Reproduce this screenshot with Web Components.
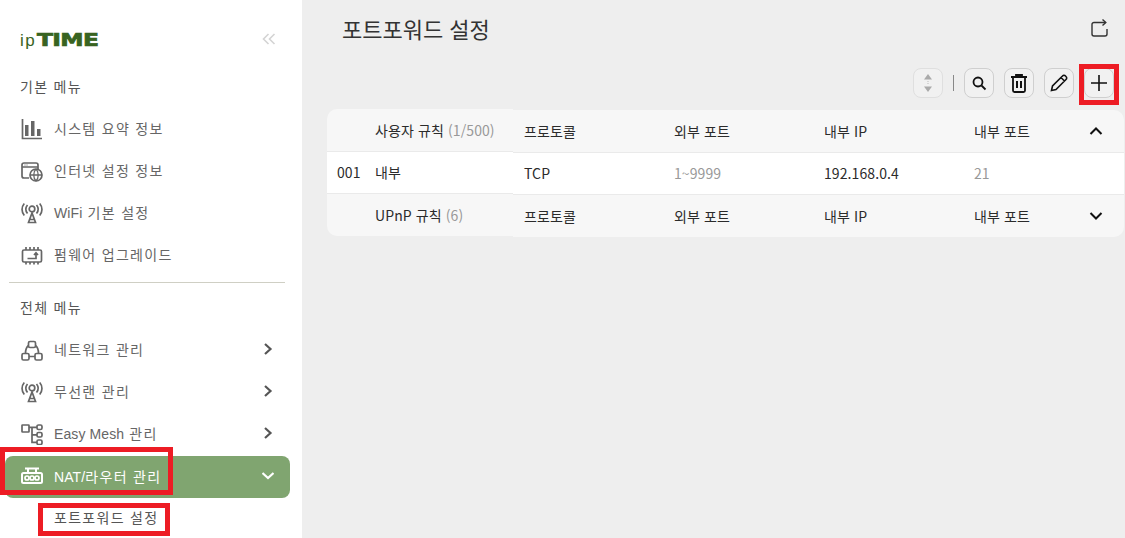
<!DOCTYPE html>
<html lang="ko">
<head>
<meta charset="utf-8">
<title>포트포워드 설정</title>
<style>
  html, body { margin: 0; height: 538px; overflow: hidden; }
  body { display: flex; background: #eeeeee; font-family: "Noto Sans CJK KR", sans-serif; }
  .mark { position: absolute; border: 5px solid #ed1c24; box-sizing: border-box; pointer-events: none; }
  .lat { letter-spacing: .1px; }
</style>
</head>
<body>
<side-bar>
  <brand-head></brand-head>
  <menu-label>기본 메뉴</menu-label>
  <menu-item icon="chart">시스템 요약 정보</menu-item>
  <menu-item icon="web">인터넷 설정 정보</menu-item>
  <menu-item icon="wifi"><span class="lat">WiFi</span> 기본 설정</menu-item>
  <menu-item icon="chip">펌웨어 업그레이드</menu-item>
  <menu-rule></menu-rule>
  <menu-label>전체 메뉴</menu-label>
  <menu-item icon="net" arrow="right">네트워크 관리</menu-item>
  <menu-item icon="wifi" arrow="right">무선랜 관리</menu-item>
  <menu-item icon="mesh" arrow="right"><span class="lat">Easy Mesh</span> 관리</menu-item>
  <menu-item icon="router" arrow="down" active><span class="lat">NAT/</span>라우터 관리</menu-item>
  <sub-item>포트포워드 설정</sub-item>
</side-bar>
<main-pane></main-pane>
<div class="mark" style="left:0;top:447px;width:173px;height:48px"></div>
<div class="mark" style="left:38px;top:503px;width:132px;height:33px"></div>
<div class="mark" style="left:1079px;top:64px;width:40px;height:41px"></div>

<script>
const SANS = '"Liberation Sans", "Noto Sans CJK KR", sans-serif';

const ICONS = {
  chart: '<path d="M1.5 1v19.500H21"/><path d="M4 7h3.500v11H4zM10 3h3.500v15H10zM16 11h3.500v7H16z" fill="currentColor" stroke="none"/>',
  web: '<path d="M8 18H3a2 2 0 0 1-2-2V5a2 2 0 0 1 2-2h12a2 2 0 0 1 2 2v4M1 7h16"/><path d="M3.500 5h4" stroke-dasharray="1 1" stroke-width="1"/><circle cx="15" cy="15" r="6"/><path d="M9 15h12M15 9c-3 3-3 9 0 12M15 9c3 3 3 9 0 12" stroke-width="1.300"/>',
  wifi: '<circle cx="11" cy="7" r="2.800"/><path d="M11 11l-3.500 9.500h7zM8.500 17.500h5"/><path d="M6.500 3c-2 2.500-2 6 0 8.500M15.500 3c2 2.500 2 6 0 8.500M3.300 1.500c-3 3.500-3 8.500 0 12M18.700 1.500c3 3.500 3 8.500 0 12"/>',
  chip: '<rect x="1.500" y="6" width="19" height="12" rx="1.500"/><path d="M5 6V3M9 6V3M13 6V3M17 6V3M5 18v2.500M9 18v2.500M13 18v2.500M17 18v2.500"/><path d="M6.500 14.500h8.500V9M13 11l2-2.200 2 2.200"/>',
  net: '<rect x="7.500" y="2.500" width="7" height="6" rx="1.500"/><rect x="1" y="14.500" width="7" height="6.500" rx="1.500"/><rect x="14" y="14.500" width="7" height="6.500" rx="1.500"/><path d="M8 17.500h6M7.500 6.500C5.500 8 4.500 11 4.500 14.500M14.500 6.500c2 1.500 3 4.500 3 8"/>',
  mesh: '<rect x="1" y="2" width="7" height="7" rx=".5"/><rect x="16" y="2" width="5" height="4.500" rx="1.500"/><rect x="16" y="9.500" width="5" height="4.500" rx="1.500"/><rect x="16" y="17" width="5" height="4.500" rx="1.500"/><path d="M8 4.300h8M11 4.300V19.300h5M11 11.800h5"/>',
  router: '<path d="M4 2.500h14M7 2.500V7M15 2.500V7" stroke-width="2"/><path d="M2.500 7h17a1.500 1.500 0 0 1 1.500 1.500v7a1.500 1.500 0 0 1-1.500 1.500h-17A1.500 1.500 0 0 1 1 15.500v-7A1.500 1.500 0 0 1 2.500 7z" stroke-width="2"/><circle cx="6" cy="12" r="2"/><circle cx="11" cy="12" r="2"/><circle cx="16" cy="12" r="2"/>'
};

class SideBar extends HTMLElement {
  connectedCallback() {
    this.attachShadow({ mode: 'open' });
    this.shadowRoot.innerHTML = `
      <style>
        :host { display: block; flex: 0 0 302px; height: 538px; background: #fff; overflow: hidden; }
      </style>
      <slot></slot>
    `;
  }
}
customElements.define('side-bar', SideBar);

class BrandHead extends HTMLElement {
  connectedCallback() {
    this.attachShadow({ mode: 'open' });
    this.shadowRoot.innerHTML = `
      <style>
        :host { display: flex; align-items: center; justify-content: space-between; height: 66px; padding: 13px 26px 0 20px; box-sizing: border-box; }
        .logo { display: flex; align-items: baseline; color: #386321; line-height: 1; }
        .ip { font: 17px "Liberation Sans", sans-serif; letter-spacing: 1.5px; margin-right: 1px; }
        .time { font: 900 18px "DejaVu Sans", sans-serif; letter-spacing: -.5px; transform: scaleX(1.3); transform-origin: left bottom; -webkit-text-stroke: .7px #386321; }
        svg { display: block; margin-top: -1px; }
      </style>
      <div class="logo"><span class="ip">ip</span><span class="time">TIME</span></div>
      <svg width="14" height="12" viewBox="0 0 14 12" fill="none" stroke="#d4d4d4" stroke-width="1.600"><path d="M6.500 1L1.500 6l5 5M12.500 1l-5 5 5 5"/></svg>
    `;
  }
}
customElements.define('brand-head', BrandHead);

class MenuLabel extends HTMLElement {
  connectedCallback() {
    this.attachShadow({ mode: 'open' });
    this.shadowRoot.innerHTML = `
      <style>
        :host { display: flex; align-items: center; height: 40px; padding: 0 0 2px 20px; font: 14px ${SANS}; letter-spacing: 1.3px; color: #555; }
      </style>
      <slot></slot>
    `;
  }
}
customElements.define('menu-label', MenuLabel);

class MenuItem extends HTMLElement {
  connectedCallback() {
    const icon = ICONS[this.getAttribute('icon')] || '';
    const arrow = this.getAttribute('arrow');
    const active = this.hasAttribute('active');
    this.attachShadow({ mode: 'open' });
    this.shadowRoot.innerHTML = `
      <style>
        :host { display: block; height: 42px; padding: 0 12px 0 5px; font: 14px ${SANS}; letter-spacing: 1.3px; color: ${active ? '#fff' : '#666'}; }
        :host([active]) { margin-top: 1px; }
        .row { display: flex; align-items: center; height: 42px; padding-left: 16px; border-radius: 8px; background: ${active ? '#80a570' : 'transparent'}; }
        .ico { display: block; flex: none; width: 22px; height: 22px; margin-right: 11px; stroke: currentColor; stroke-width: 1.700; fill: none; }
        .lbl { flex: 1; padding-bottom: 2px; }
        .arr { flex: none; margin: 0 16px 3px 0; stroke: ${active ? '#fff' : '#555'}; fill: none; stroke-width: 2.200; }
      </style>
      <div class="row">
        <svg class="ico" viewBox="0 0 22 22">${icon}</svg>
        <span class="lbl"><slot></slot></span>
        ${arrow === 'right' ? '<svg class="arr" width="12" height="14" viewBox="0 0 12 14"><path d="M3 2l5.500 5L3 12"/></svg>' : ''}
        ${arrow === 'down' ? '<svg class="arr" width="12" height="14" viewBox="0 0 12 14"><path d="M.5 4l5.500 5 5.500-5"/></svg>' : ''}
      </div>
    `;
  }
}
customElements.define('menu-item', MenuItem);

class MenuRule extends HTMLElement {
  connectedCallback() {
    this.attachShadow({ mode: 'open' });
    this.shadowRoot.innerHTML = `
      <style>
        :host { display: block; height: 1px; margin: 6px 17px 4px 9px; background: #cfcfc4; }
      </style>
    `;
  }
}
customElements.define('menu-rule', MenuRule);

class SubItem extends HTMLElement {
  connectedCallback() {
    this.attachShadow({ mode: 'open' });
    this.shadowRoot.innerHTML = `
      <style>
        :host { display: flex; align-items: center; height: 38px; padding: 0 0 2px 54px; font: 14px ${SANS}; letter-spacing: 1.3px; color: #555; }
      </style>
      <slot></slot>
    `;
  }
}
customElements.define('sub-item', SubItem);

class ToolButton extends HTMLElement {
  connectedCallback() {
    const off = this.hasAttribute('disabled');
    this.attachShadow({ mode: 'open' });
    this.shadowRoot.innerHTML = `
      <style>
        :host { display: flex; align-items: center; justify-content: center; width: 30px; height: 30px; box-sizing: border-box; border: 1px solid ${off ? '#dfdfdf' : '#cfcfcf'}; border-radius: 8px; background: #f1f1f1; }
      </style>
      <slot></slot>
    `;
  }
}
customElements.define('tool-button', ToolButton);

class RuleRow extends HTMLElement {
  connectedCallback() {
    this.attachShadow({ mode: 'open' });
    this.shadowRoot.innerHTML = `
      <style>
        :host { display: grid; align-items: center; height: 43px; box-sizing: border-box; border-bottom: 1px solid #eaeaea; background: #f7f7f7; font: 14px "Noto Sans CJK KR", sans-serif; letter-spacing: .1px; color: #2b2b2b; }
        :host([name]) { grid-template-columns: 48px 1fr; }
        :host([data]) { grid-template-columns: 150px 150px 150px 1fr 56px; padding-left: 11px; }
        :host([last]) { height: 42px; border-bottom: 0; }
        :host([plain]) { height: 42px; padding-bottom: 1px; background: #fff; }
      </style>
      <slot></slot>
    `;
  }
}
customElements.define('rule-row', RuleRow);

class RulePane extends HTMLElement {
  connectedCallback() {
    this.attachShadow({ mode: 'open' });
    this.shadowRoot.innerHTML = `
      <style>
        :host { display: block; overflow: hidden; height: 127px; }
        :host([left]) { flex: 0 0 186px; border-radius: 10px 0 0 10px; }
        :host([right]) { flex: 1; margin-top: 1px; border-radius: 0 10px 10px 0; }
      </style>
      <slot></slot>
    `;
  }
}
customElements.define('rule-pane', RulePane);

class RuleTable extends HTMLElement {
  connectedCallback() {
    this.attachShadow({ mode: 'open' });
    this.shadowRoot.innerHTML = `
      <style>
        :host { display: flex; align-items: flex-start; margin: 0 1px 0 25px; }
      </style>
      <slot></slot>
    `;
  }
}
customElements.define('rule-table', RuleTable);

class MainPane extends HTMLElement {
  connectedCallback() {
    this.attachShadow({ mode: 'open' });
    const up = '<svg width="14" height="10" viewBox="0 0 14 10" fill="none" stroke="#111" stroke-width="2"><path d="M1.500 8L7 2.500 12.500 8"/></svg>';
    const down = '<svg width="14" height="10" viewBox="0 0 14 10" fill="none" stroke="#111" stroke-width="2"><path d="M1.500 2L7 7.500 12.500 2"/></svg>';
    this.shadowRoot.innerHTML = `
      <style>
        :host { display: block; flex: 1; min-width: 0; font-family: "Noto Sans CJK KR", sans-serif; }
        .top { display: flex; align-items: center; justify-content: space-between; height: 58px; padding: 0 17px 0 40px; }
        h1 { margin: 0 0 3px; font-size: 22px; font-weight: 400; color: #333; }
        .top svg { overflow: visible; }
        .tools { display: flex; align-items: center; justify-content: flex-end; gap: 10px; height: 51px; padding: 0 11px 1px 0; box-sizing: border-box; }
        .sep { width: 1px; height: 16px; background: #888; }
        tool-button svg { display: block; }
        .num { padding-left: 10px; }
        .dim { color: #999; }
        .chev { display: flex; justify-content: center; }
      </style>
      <div class="top">
        <h1>포트포워드 설정</h1>
        <svg width="18" height="18" viewBox="0 0 18 18" fill="none" stroke="#333" stroke-width="1.400"><path d="M15.500 2.500H4a2 2 0 0 0-2 2V14a2 2 0 0 0 2 2h11a2 2 0 0 0 2-2V9"/><path d="M12.500 -.5L15.800 2.500 12.500 5.500"/></svg>
      </div>
      <div class="tools">
        <tool-button disabled><svg width="12" height="20" viewBox="0 0 12 20"><path d="M6 1l4 5.500H2zM6 19l4-5.500H2z" fill="#aaa"/><path d="M6 8v4" stroke="#bbb" stroke-dasharray="1 1"/></svg></tool-button>
        <div class="sep"></div>
        <tool-button><svg width="16" height="16" viewBox="0 0 16 16" fill="none" stroke="#111" stroke-width="1.800"><circle cx="7" cy="7" r="4.500"/><path d="M10.500 10.500L14.500 14.500"/></svg></tool-button>
        <tool-button><svg width="18" height="20" viewBox="0 0 18 20" fill="none" stroke="#111" stroke-width="1.800"><path d="M1 4h16M6 4V2h6v2M3 4v13.500A1.500 1.500 0 0 0 4.500 19h9a1.500 1.500 0 0 0 1.500-1.500V4"/><path d="M7 8v7M11 8v7" stroke-width="2"/></svg></tool-button>
        <tool-button><svg width="20" height="20" viewBox="0 0 20 20" fill="none" stroke="#111" stroke-width="1.600"><path d="M2.500 17.500l1-4.500L13.500 3a2 2 0 0 1 3 0l.5.500a2 2 0 0 1 0 3L7 16.500zM12 4.500l3.500 3.500"/></svg></tool-button>
        <tool-button><svg width="18" height="18" viewBox="0 0 18 18" stroke="#111" stroke-width="1.600"><path d="M9 1v16M1 9h16"/></svg></tool-button>
      </div>
      <rule-table>
        <rule-pane left>
          <rule-row name><span></span><span>사용자 규칙 <span class="dim">(1/500)</span></span></rule-row>
          <rule-row name plain><span class="num">001</span><span>내부</span></rule-row>
          <rule-row name last><span></span><span>UPnP 규칙 <span class="dim">(6)</span></span></rule-row>
        </rule-pane>
        <rule-pane right>
          <rule-row data><span>프로토콜</span><span>외부 포트</span><span>내부 IP</span><span>내부 포트</span><span class="chev">${up}</span></rule-row>
          <rule-row data plain><span>TCP</span><span class="dim">1~9999</span><span>192.168.0.4</span><span class="dim">21</span><span></span></rule-row>
          <rule-row data last><span>프로토콜</span><span>외부 포트</span><span>내부 IP</span><span>내부 포트</span><span class="chev">${down}</span></rule-row>
        </rule-pane>
      </rule-table>
    `;
  }
}
customElements.define('main-pane', MainPane);
</script>
</body>
</html>
